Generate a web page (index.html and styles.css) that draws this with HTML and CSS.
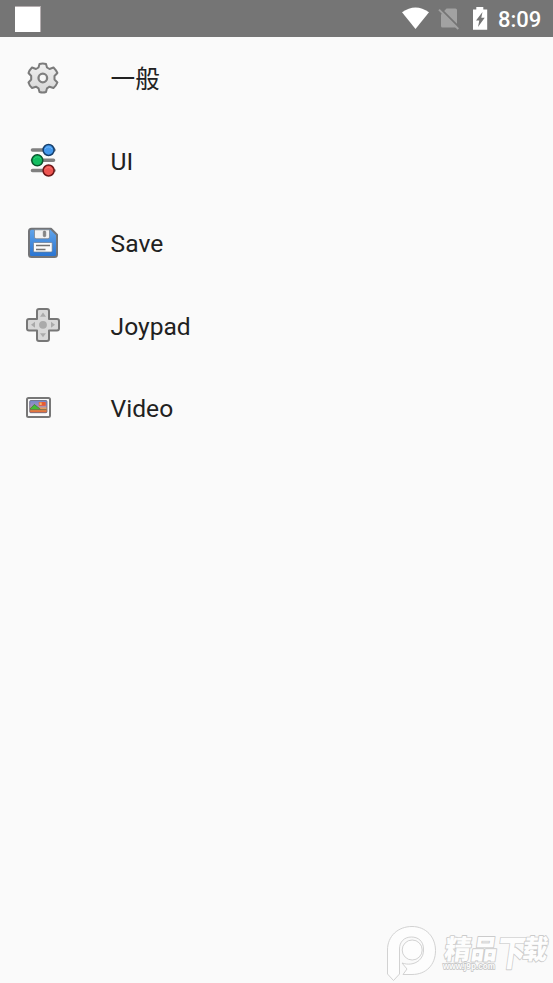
FILE: index.html
```
<!DOCTYPE html>
<html lang="zh">
<head>
<meta charset="utf-8">
<title>Settings</title>
<link rel="stylesheet" href="styles.css">
</head>
<body>
<header class="status">
  <span class="app-mark"></span>
  <div class="status-right">
    <svg class="status-icons" width="100" height="37" viewBox="0 0 100 37">
      <path fill="#fff" d="M9 12.300Q22.500 2.500 36 12.300L22.500 29Z"/>
      <path fill="#a2a2a2" d="M48 14.500L53.500 8.500H62.500Q64 8.500 64 10V27.500H49.500Q48 27.500 48 26Z"/>
      <path stroke="#757575" stroke-width="2" d="M47.500 8.800L67 28.300"/>
      <path stroke="#a2a2a2" stroke-width="1.900" d="M46 9.700L65.300 29"/>
      <path fill="#fff" d="M83.300 7H90.300V9.500H94.200V29.700H80V9.500H83.300Z"/>
      <path fill="#757575" d="M89.500 12L83 20.500H86.300L85 27L91.700 17.700H88.300Z"/>
    </svg>
    <time class="clock">8:09</time>
  </div>
</header>
<main class="list">
  <div class="row">
    <svg class="icon" viewBox="0 0 45 45">
      <defs><linearGradient id="gear" x2="0" y2="1"><stop stop-color="#f0f0f0"/><stop offset="1" stop-color="#d6d6d6"/></linearGradient></defs>
      <path fill="url(#gear)" stroke="#7b7b7b" stroke-width="2" stroke-linejoin="round" d="M19.500 9Q22.800 7.800 26 9L27 12.500L29.500 14L33.500 12.500Q36 15 37.400 18L34.500 21V24.500L37.400 27.500Q36 31 33.500 33L29.500 31.700L27 33.300L26 37Q22.800 38 19.500 37L18.500 33.300L16 31.700L12 33Q9.500 31 8.500 27.500L11.200 24.500V21L8.500 18Q9.500 15 12 12.500L16 14L18.500 12.500Z"/>
      <circle cx="22.800" cy="23" r="4.300" fill="#f8f8f8" stroke="#808080" stroke-width="2.300"/>
    </svg>
    <span class="label label-cjk">一般</span>
  </div>
  <div class="row short">
    <svg class="icon" viewBox="0 0 45 45">
      <path stroke="#808080" stroke-width="3.600" stroke-linecap="round" d="M12.500 12H34M12.500 22.300H33.500M12.500 32.500H34"/>
      <circle cx="28.600" cy="12" r="5.500" fill="#4499ed" stroke="#163f6c" stroke-width="1.500"/>
      <circle cx="17.300" cy="22.300" r="5.500" fill="#12bd60" stroke="#07552b" stroke-width="1.500"/>
      <circle cx="28.600" cy="32.500" r="5.500" fill="#ed5551" stroke="#6c1516" stroke-width="1.500"/>
      <path fill="none" stroke="#70b6fa" d="M25 11A4 4 0 0 1 32 11"/>
      <path fill="none" stroke="#32ce7a" d="M14 21A4 4 0 0 1 21 21"/>
      <path fill="none" stroke="#f97a74" d="M25 31.500A4 4 0 0 1 32 31.500"/>
    </svg>
    <span class="label">UI</span>
  </div>
  <div class="row">
    <svg class="icon" viewBox="0 0 45 45">
      <defs><linearGradient id="disk" x2="0" y2="1"><stop stop-color="#62a5ea"/><stop offset="1" stop-color="#2873d1"/></linearGradient></defs>
      <path fill="url(#disk)" stroke="#737477" stroke-width="2" stroke-linejoin="round" d="M11.500 8.800H31L37 14.700V34.500Q37 37 34.500 37H11.500Q9 37 9 34.500V11.300Q9 8.800 11.500 8.800Z"/>
      <path fill="#f2f2f2" stroke="#777d85" stroke-width=".7" d="M14.500 9.800H29.500V17Q29.500 18.700 28 18.700H16Q14.500 18.700 14.500 17Z"/>
      <rect x="23.200" y="11" width="2.600" height="5.700" rx="1" fill="#858585" stroke="#707070" stroke-width=".5"/>
      <rect x="13.500" y="22.500" width="18.700" height="9.500" rx="1" fill="#fafafa" stroke="#68798e" stroke-width=".7"/>
      <path stroke="#717171" stroke-width="1.500" d="M16 25.500H30M16 29.500H25.500"/>
    </svg>
    <span class="label">Save</span>
  </div>
  <div class="row short">
    <svg class="icon" viewBox="0 0 45 45">
      <path fill="#d8d8d8" stroke="#777" stroke-width="2" stroke-linejoin="round" d="M19 6H27Q29 6 29 8V16H37Q39 16 39 18V25.500Q39 27.500 37 27.500H29V36Q29 38 27 38H19Q17 38 17 36V27.500H9Q7 27.500 7 25.500V18Q7 16 9 16H17V8Q17 6 19 6Z"/>
      <circle cx="23" cy="21.800" r="3.900" fill="#aaa"/>
      <path fill="#aaa" d="M23 9.500L26 13.700H20ZM23 34.200L20 30.300H26ZM11 21.800L15 18.800V24.800ZM35 21.800L31 18.800V24.800Z"/>
    </svg>
    <span class="label">Joypad</span>
  </div>
  <div class="row">
    <svg class="icon" viewBox="0 0 45 45">
      <defs><linearGradient id="sky" x2="0" y2="1"><stop stop-color="#7287c8"/><stop offset=".45" stop-color="#a290c2"/><stop offset=".7" stop-color="#f3a24a"/><stop offset="1" stop-color="#dc5b38"/></linearGradient></defs>
      <rect x="7" y="13" width="23" height="19" rx="1.500" fill="#fafafa" stroke="#777" stroke-width="2"/>
      <rect x="9.700" y="15.500" width="17.300" height="12.200" rx="1" fill="url(#sky)" stroke="#666679" stroke-width=".8"/>
      <path fill="#43bd36" d="M10 24.500L14.300 19.500L20.300 24.500Z"/>
      <path fill="none" stroke="#35732f" stroke-width=".7" d="M10 24L14.300 19.500L20.300 24"/>
      <path stroke="#59614e" stroke-width=".8" d="M10 24.700H26.500"/>
      <path fill="#e85b32" d="M18.800 17H25.700V20.800H18.800Z"/>
      <path fill="#f3b368" d="M19.500 17.500H21.700V20H19.500Z"/>
    </svg>
    <span class="label">Video</span>
  </div>
</main>
<svg class="watermark" width="173" height="63" viewBox="0 0 173 63">
  <g fill="#fdfdfd" stroke="#cdcdcd" stroke-width=".9" stroke-linejoin="round">
    <path d="M7.500 30C7.500 16 18 6.500 32 6.500C46 6.500 55.500 17 55.500 30.500C55.500 45 46 54.500 32 54.500H23L27 49L22 43C28 45 34 44.500 39 40.500A14 14 0 0 0 43.500 29C43.500 21 38 17 31.500 17C24 17 19.500 22 19.500 29V54L13.500 60.500L7.500 54Z"/>
    <circle cx="32.200" cy="30" r="10"/>
  </g>
  <g class="brand" transform="skewX(-8)">
    <text x="69" y="39" textLength="53" lengthAdjust="spacingAndGlyphs" class="brand-a">精品</text>
    <text x="122" y="46" textLength="29" lengthAdjust="spacingAndGlyphs" class="brand-b">下</text>
    <text x="147" y="39" textLength="25" lengthAdjust="spacingAndGlyphs" class="brand-a">载</text>
  </g>
  <text x="63" y="48.500" textLength="52" lengthAdjust="spacingAndGlyphs" class="site">www.j9p.com</text>
</svg>
</body>
</html>
```
FILE: styles.css
```
* { box-sizing: border-box; }
body {
  margin: 0;
  height: 983px;
  overflow: hidden;
  background: #fafafa;
  color: #212121;
  font-family: Roboto, "Noto Sans CJK SC", sans-serif;
}
.status {
  display: flex;
  align-items: center;
  justify-content: space-between;
  height: 37px;
  padding: 0 12px 0 15px;
  background: #757575;
}
.app-mark {
  width: 26px;
  height: 26px;
  background: #fff;
  border-top: 1px solid #b5aeb0;
  border-right: 1px solid #b5aeb0;
}
.status-right { display: flex; align-items: center; height: 37px; }
.status-icons { display: block; margin-right: 5px; fill: none; }
.clock {
  width: 43px;
  color: #fff;
  font-size: 22px;
  font-weight: 500;
  line-height: 37px;
  padding-top: 2px;
  white-space: nowrap;
}
.list { display: flex; flex-direction: column; }
.row {
  display: flex;
  gap: 45.6px;
  height: 83px;
  padding: 18px 20px 0;
}
.short { height: 82px; }
.icon { width: 45px; height: 45px; flex: none; }
.label { font-size: 24.6px; line-height: 48px; }
.label-cjk { line-height: 50px; }
.watermark { position: absolute; right: 0; bottom: 0; }
.brand text {
  font-family: "Noto Sans CJK SC", sans-serif;
  font-weight: 900;
  fill: #fdfdfd;
  stroke: #cbcbcb;
  stroke-width: 1.8px;
  stroke-linejoin: round;
  paint-order: stroke;
}
.brand .brand-a { font-size: 27px; }
.brand .brand-b { font-size: 36px; }
.site {
  font-family: "Liberation Sans", sans-serif;
  font-size: 9.5px;
  font-weight: 700;
  fill: #fdfdfd;
  stroke: #c4c4c4;
  stroke-width: 1.5px;
  paint-order: stroke;
}
```
